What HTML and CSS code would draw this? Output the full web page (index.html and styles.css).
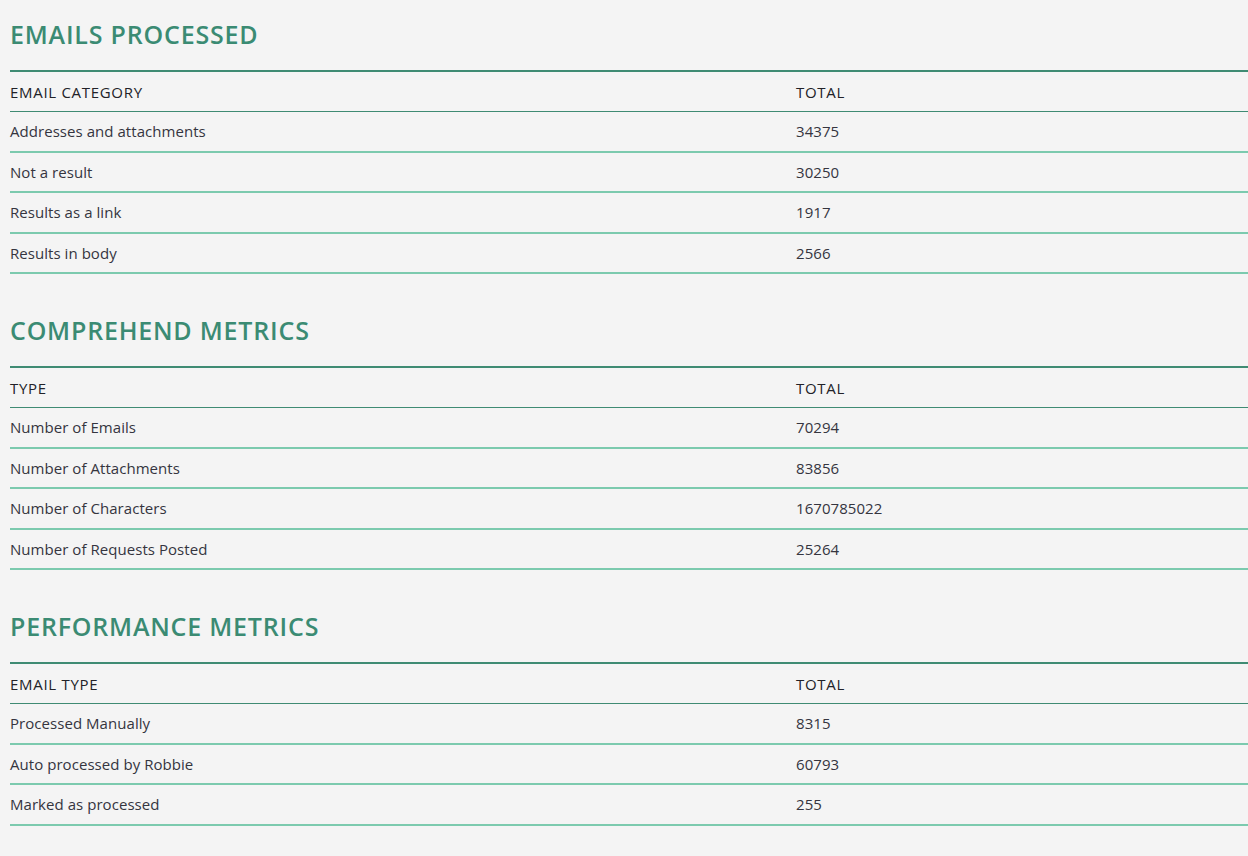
FILE: index.html
```html
<!DOCTYPE html>
<html lang="en">
<head>
<meta charset="utf-8">
<title>Metrics</title>
<link rel="stylesheet" href="styles.css">
</head>
<body>
<section class="block">
  <h2 class="block-title">EMAILS PROCESSED</h2>
  <table class="metrics">
    <thead>
      <tr><th class="col-name">EMAIL CATEGORY</th><th>TOTAL</th></tr>
    </thead>
    <tbody>
      <tr><td>Addresses and attachments</td><td>34375</td></tr>
      <tr><td>Not a result</td><td>30250</td></tr>
      <tr><td>Results as a link</td><td>1917</td></tr>
      <tr><td>Results in body</td><td>2566</td></tr>
    </tbody>
  </table>
</section>
<section class="block">
  <h2 class="block-title">COMPREHEND METRICS</h2>
  <table class="metrics">
    <thead>
      <tr><th class="col-name">TYPE</th><th>TOTAL</th></tr>
    </thead>
    <tbody>
      <tr><td>Number of Emails</td><td>70294</td></tr>
      <tr><td>Number of Attachments</td><td>83856</td></tr>
      <tr><td>Number of Characters</td><td>1670785022</td></tr>
      <tr><td>Number of Requests Posted</td><td>25264</td></tr>
    </tbody>
  </table>
</section>
<section class="block">
  <h2 class="block-title">PERFORMANCE METRICS</h2>
  <table class="metrics">
    <thead>
      <tr><th class="col-name">EMAIL TYPE</th><th>TOTAL</th></tr>
    </thead>
    <tbody>
      <tr><td>Processed Manually</td><td>8315</td></tr>
      <tr><td>Auto processed by Robbie</td><td>60793</td></tr>
      <tr><td>Marked as processed</td><td>255</td></tr>
    </tbody>
  </table>
</section>
</body>
</html>
```
FILE: styles.css
```css
html, body {
  margin: 0;
  padding: 0;
  background: #f4f4f4;
}
body {
  padding-left: 10px;
  font-family: "Open Sans", "Liberation Sans", sans-serif;
  color: #35353f;
}
.block {
  padding-top: 19px;
  padding-bottom: 22px;
}
.block-title {
  margin: 0 0 21px 0;
  font-size: 25px;
  line-height: 30px;
  font-weight: 600;
  letter-spacing: 0.8px;
  color: #3b8b73;
}
.metrics {
  width: 100%;
  border-collapse: collapse;
  border-top: 2px solid #3f8b73;
  font-size: 15px;
  letter-spacing: 0.05px;
}
.metrics th {
  text-align: left;
  font-weight: 400;
  color: #222228;
  height: 39px;
  padding: 0;
  letter-spacing: 0.7px;
  border-bottom: 1px solid #3f8b73;
  vertical-align: middle;
}
.metrics .col-name {
  width: 786px;
}
.metrics td {
  height: 38.5px;
  padding: 0;
  border-bottom: 2px solid #7ccaae;
  vertical-align: middle;
}
```
